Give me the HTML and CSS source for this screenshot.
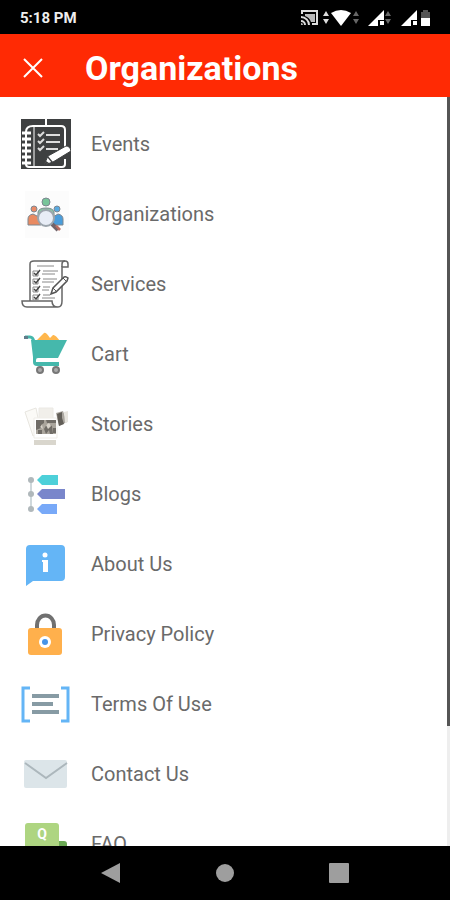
FILE: index.html
```html
<!DOCTYPE html>
<html lang="en">
<head>
<meta charset="utf-8">
<meta name="viewport" content="width=device-width, initial-scale=1">
<title>Organizations</title>
<link rel="stylesheet" href="styles.css">
</head>
<body>
<div class="status">
  <span>5:18 PM</span>
  <svg class="status-icons" viewBox="0 0 132 18" aria-hidden="true">
    <g fill="none" stroke="#ddd" stroke-width="2"><path d="M2 5V2h15v13h-5"/><path d="M1 8a8 8 0 0 1 8 8M1 12a4 4 0 0 1 4 4"/></g>
    <path fill="#bbb" d="M5 5h10v8h-4a9 9 0 0 0-6-6zM1 14a2 2 0 0 1 2 2H1z"/>
    <path fill="#ddd" d="M23 7l3-5 3 5zM23 10l3 5 3-5z"/>
    <path fill="#fff" d="M31 4q10-6 20 0L41 17z"/>
    <path fill="#666" d="M53 7l3-5 3 5zM53 10l3 5 3-5zM85 7l3-5 3 5zM85 10l3 5 3-5z"/>
    <path fill="#fff" d="M68 17L84 1v10h-6v6zM80 12h4v4h-4zM101 17l16-16v10h-6v6zM113 12h4v4h-4z"/>
    <path fill="#555" d="M121 3h2V1h5v2h2v6h-9z"/><path fill="#fff" d="M121 9h9v8h-9z"/>
  </svg>
</div>
<header class="header">
  <button class="close" type="button" aria-label="Close">
    <svg viewBox="0 0 20 20"><path d="M1 1l18 18M19 1L1 19" fill="none" stroke="#fff" stroke-width="2"/></svg>
  </button>
  <h1>Organizations</h1>
</header>
<main class="content">
  <nav class="menu">
    <a href="#events"><svg viewBox="0 0 52 52" aria-hidden="true">
      <path fill="#3e4041" d="M2 1h50v50H2z"/>
      <g fill="none" stroke="#fff" stroke-width="2"><path d="M27 1v7M17 8h25q4 0 4 4v19M46 41v5q0 3-3 3H10q-3 0-3-3V14q0-6 7-6h3"/><path stroke-width="1" d="M15 9v40"/><path stroke-width="3" d="M3 15h9M3 21h9M3 27h9M3 33h9M3 39h9M3 45h9"/></g>
      <g fill="none" stroke="#ddd" stroke-width="2"><path d="M19 16l2 2 4-4M19 23l2 2 4-4M19 30l2 2 4-4M27 17h14M27 24h14M27 31h12"/></g>
      <path fill="#fff" stroke="#3e4041" d="M25 47l4-9 18-10q4 0 5 5L34 44z"/><path fill="#3e4041" d="M25 47l2-4 3 2zM29 38l5 6-1 1-5-6z"/>
    </svg><span>Events</span></a>
    <a href="#organizations"><svg viewBox="0 0 52 52" aria-hidden="true">
      <path fill="#fcfcfc" d="M6 3h44v47H6z"/>
      <g stroke="#7d8790" stroke-width="1">
        <path fill="#8cc9a6" d="M19 28v-4q1-4 8-4t8 4v4z"/><circle cx="27" cy="14" r="4" fill="#78c59a"/>
        <circle cx="15" cy="21" r="3" fill="#e98b68"/><circle cx="38" cy="21" r="3" fill="#5aaae0"/>
        <path fill="#e98b62" d="M9 37v-6q0-4 5-5l6 3 2 8z"/><path fill="#4a9ddb" d="M32 37l2-8 5-3q5 1 5 5v6z"/>
        <path fill="none" stroke="#71646a" stroke-width="4" d="M33 36l6 6"/><circle cx="27" cy="30" r="8" fill="#e8edf6" stroke="#9ca5ad" stroke-width="2"/>
      </g><path fill="#b96d62" d="M36 38l2-1 4 4-2 2z"/>
    </svg><span>Organizations</span></a>
    <a href="#services"><svg viewBox="0 0 52 52" aria-hidden="true">
      <g fill="#fff" stroke="#666" stroke-width="1.5"><path d="M11 43V6q0-3 4-3h31q3 0 3 3v3h-6v34q0 6-4 6H8q-5 0-5-6h30q0 6 6 6"/><path fill="none" d="M43 9V6q0-3 3-3"/></g>
      <g fill="none" stroke="#888"><path d="M18 8h17M24 13h15M23 16h13M24 21h14M23 24h12M24 29h7M23 32h7M24 37h7M23 40h13"/><path d="M14 13h5v5h-5zM14 21h5v5h-5zM14 29h5v5h-5zM14 37h5v5h-5z"/></g>
      <path fill="none" stroke="#444" stroke-width="1.5" d="M15 15l2 2 4-5M15 23l2 2 4-5M15 31l2 2 4-5M15 39l2 2 4-5"/>
      <path fill="#fff" stroke="#555" stroke-width="1.5" d="M32 36l2-6 11-11q2-1 4 1l-1 3-11 11z"/><path stroke="#555" d="M34 30l3 3M44 20l4 4"/>
    </svg><span>Services</span></a>
    <a href="#cart"><svg viewBox="0 0 52 52" aria-hidden="true">
      <path fill="#ffb74d" d="M17 13l8-8q2-1 6 5l3-3q2-1 7 6z"/>
      <path fill="#45b8ac" d="M14 12h34l-9 18H19q-2 0-2 2v2h23v4H18q-4 0-4-4v-5L12 12z"/>
      <path fill="none" stroke="#45b8ac" stroke-width="3" d="M6 9h5q3 0 4 5"/><path fill="#607d8b" d="M5 8h4v3H5z"/>
      <g fill="#aaa" stroke="#777" stroke-width="2"><circle cx="21" cy="42" r="3"/><circle cx="37" cy="42" r="3"/></g>
    </svg><span>Cart</span></a>
    <a href="#stories"><svg viewBox="0 0 52 52" aria-hidden="true">
      <path fill="#fbfaf7" stroke="#e8e6e0" d="M6 14l11-4 5 25-8 3z"/><path fill="#f1efea" stroke="#ebe9e4" d="M20 10h14v12H20z"/>
      <path fill="#fff" stroke="#efede8" d="M15 20h23v20H15z"/><path fill="#aaa59c" d="M17 22h20v14H17z"/>
      <path fill="#706c66" d="M17 22h8v3l-3 2v3l-5 2zM27 22h10v3h-9zM25 31l3-5 5 2 1 8h-3l-1-4-3 4zM19 32h4v4h-4zM34 30h3v5h-3z"/>
      <path fill="#d8d3ca" d="M27 27l3-2 2 3-3 3zM21 29l2-2 1 4z"/>
      <path fill="#aaa69f" d="M37 15l7-2 4 11-8 4z"/><path fill="#625e58" d="M38 16l5-2v6l2 6-5 2-1-5z"/><path fill="#e8e5df" d="M45 14l4-1v11l-3 1z"/><path fill="#d9d6cd" d="M15 42h22v5H15z"/>
    </svg><span>Stories</span></a>
    <a href="#blogs"><svg viewBox="0 0 52 52" aria-hidden="true">
      <path stroke="#cfd8dc" stroke-width="2" d="M12 12v29"/><g fill="#b0b8bb"><circle cx="12" cy="12" r="3"/><circle cx="12" cy="26" r="3"/><circle cx="12" cy="41" r="3"/></g>
      <path fill="#4dd0d9" d="M18 12l5-5h16v10H23z"/><path fill="#7986cb" d="M18 26l5-5h23v10H23z"/><path fill="#78a9f8" d="M18 41l5-5h15v10H23z"/>
    </svg><span>Blogs</span></a>
    <a href="#about"><svg viewBox="0 0 52 52" aria-hidden="true">
      <path fill="#64b5f6" d="M7 11q0-4 4-4h31q4 0 4 4v28q0 4-4 4H14l-7 5z"/><circle cx="26" cy="17" r="2.5" fill="#fff"/><path fill="#fff" d="M23 22h6v12h-5V24h-1z"/>
    </svg><span>About Us</span></a>
    <a href="#privacy"><svg viewBox="0 0 52 52" aria-hidden="true">
      <path fill="none" stroke="#707070" stroke-width="4" d="M18 22v-5a8 9 0 0 1 17 0v5"/><rect x="9" y="20" width="34" height="27" rx="3" fill="#ffb04c"/><circle cx="26" cy="34" r="6" fill="#fff"/><circle cx="26" cy="34" r="3" fill="#4694e8"/>
    </svg><span>Privacy Policy</span></a>
    <a href="#terms"><svg viewBox="0 0 52 52" aria-hidden="true">
      <path fill="none" stroke="#64b5f6" stroke-width="3" d="M11 10H4v33h7M42 10h7v33h-7"/><path fill="#879ba4" d="M13 16h27v4H13zM13 24h21v4H13zM13 32h27v4H13z"/>
    </svg><span>Terms Of Use</span></a>
    <a href="#contact"><svg viewBox="0 0 52 52" aria-hidden="true">
      <rect x="5" y="12" width="43" height="28" rx="2" fill="#dce5e9"/><path fill="none" stroke="#acb7bc" stroke-width="2" d="M6 15l21 15 21-15"/>
    </svg><span>Contact Us</span></a>
    <a href="#faq"><svg viewBox="0 0 52 52" aria-hidden="true">
      <rect x="22" y="23" width="26" height="20" rx="3" fill="#6ba954"/><rect x="6" y="5" width="34" height="28" rx="3" fill="#aed581"/><text class="q" x="23" y="21" text-anchor="middle">Q</text>
    </svg><span>FAQ</span></a>
  </nav>
  <div class="track"><div class="thumb"></div></div>
</main>
<footer class="system">
  <button type="button" aria-label="Back"><svg viewBox="0 0 20 20"><path d="M0 10L19 0v20z"/></svg></button>
  <button type="button" aria-label="Home"><svg viewBox="0 0 20 20"><circle cx="10" cy="10" r="9"/></svg></button>
  <button type="button" aria-label="Recent apps"><svg viewBox="0 0 20 20"><rect width="20" height="20" rx="1"/></svg></button>
</footer>
</body>
</html>
```
FILE: styles.css
```css
* { box-sizing: border-box; }
body {
  margin: 0;
  height: 100vh;
  display: flex;
  flex-direction: column;
  overflow: hidden;
  background: #fff;
  font-family: Roboto, "Liberation Sans", sans-serif;
}
svg { display: block; flex: none; }
button { border: 0; padding: 0; background: none; }

.status {
  flex: none;
  display: flex;
  align-items: center;
  justify-content: space-between;
  height: 34px;
  padding: 2px 18px 0 20px;
  background: #000;
  color: #eee;
  font-size: 15px;
  font-weight: 700;
}
.status-icons { width: 132px; height: 18px; }

.header {
  flex: none;
  display: flex;
  align-items: center;
  gap: 42px;
  height: 63px;
  padding: 4px 23px 0;
  background: #ff2a04;
  color: #fff;
}
.close svg { width: 20px; height: 20px; }
h1 { margin: 0; font-size: 34px; line-height: 40px; font-weight: 700; }

.content { flex: 1; min-height: 0; display: flex; }
.menu { flex: 1; padding-top: 12px; overflow: hidden; }
.menu a {
  display: flex;
  align-items: center;
  gap: 20px;
  height: 70px;
  padding-left: 19px;
  color: #6a6a6a;
  font-size: 20px;
  text-decoration: none;
}
.menu svg { width: 52px; height: 52px; }
.q { fill: #fff; font-size: 14px; font-weight: 700; }
.track { width: 3px; background: #eee; }
.thumb { height: 84%; background: #555; }

.system {
  flex: none;
  display: grid;
  grid-template-columns: repeat(3, 1fr);
  place-items: center;
  height: 54px;
  padding: 0 12%;
  background: #000;
}
.system svg { width: 20px; height: 20px; fill: #9e9e9e; }
```
